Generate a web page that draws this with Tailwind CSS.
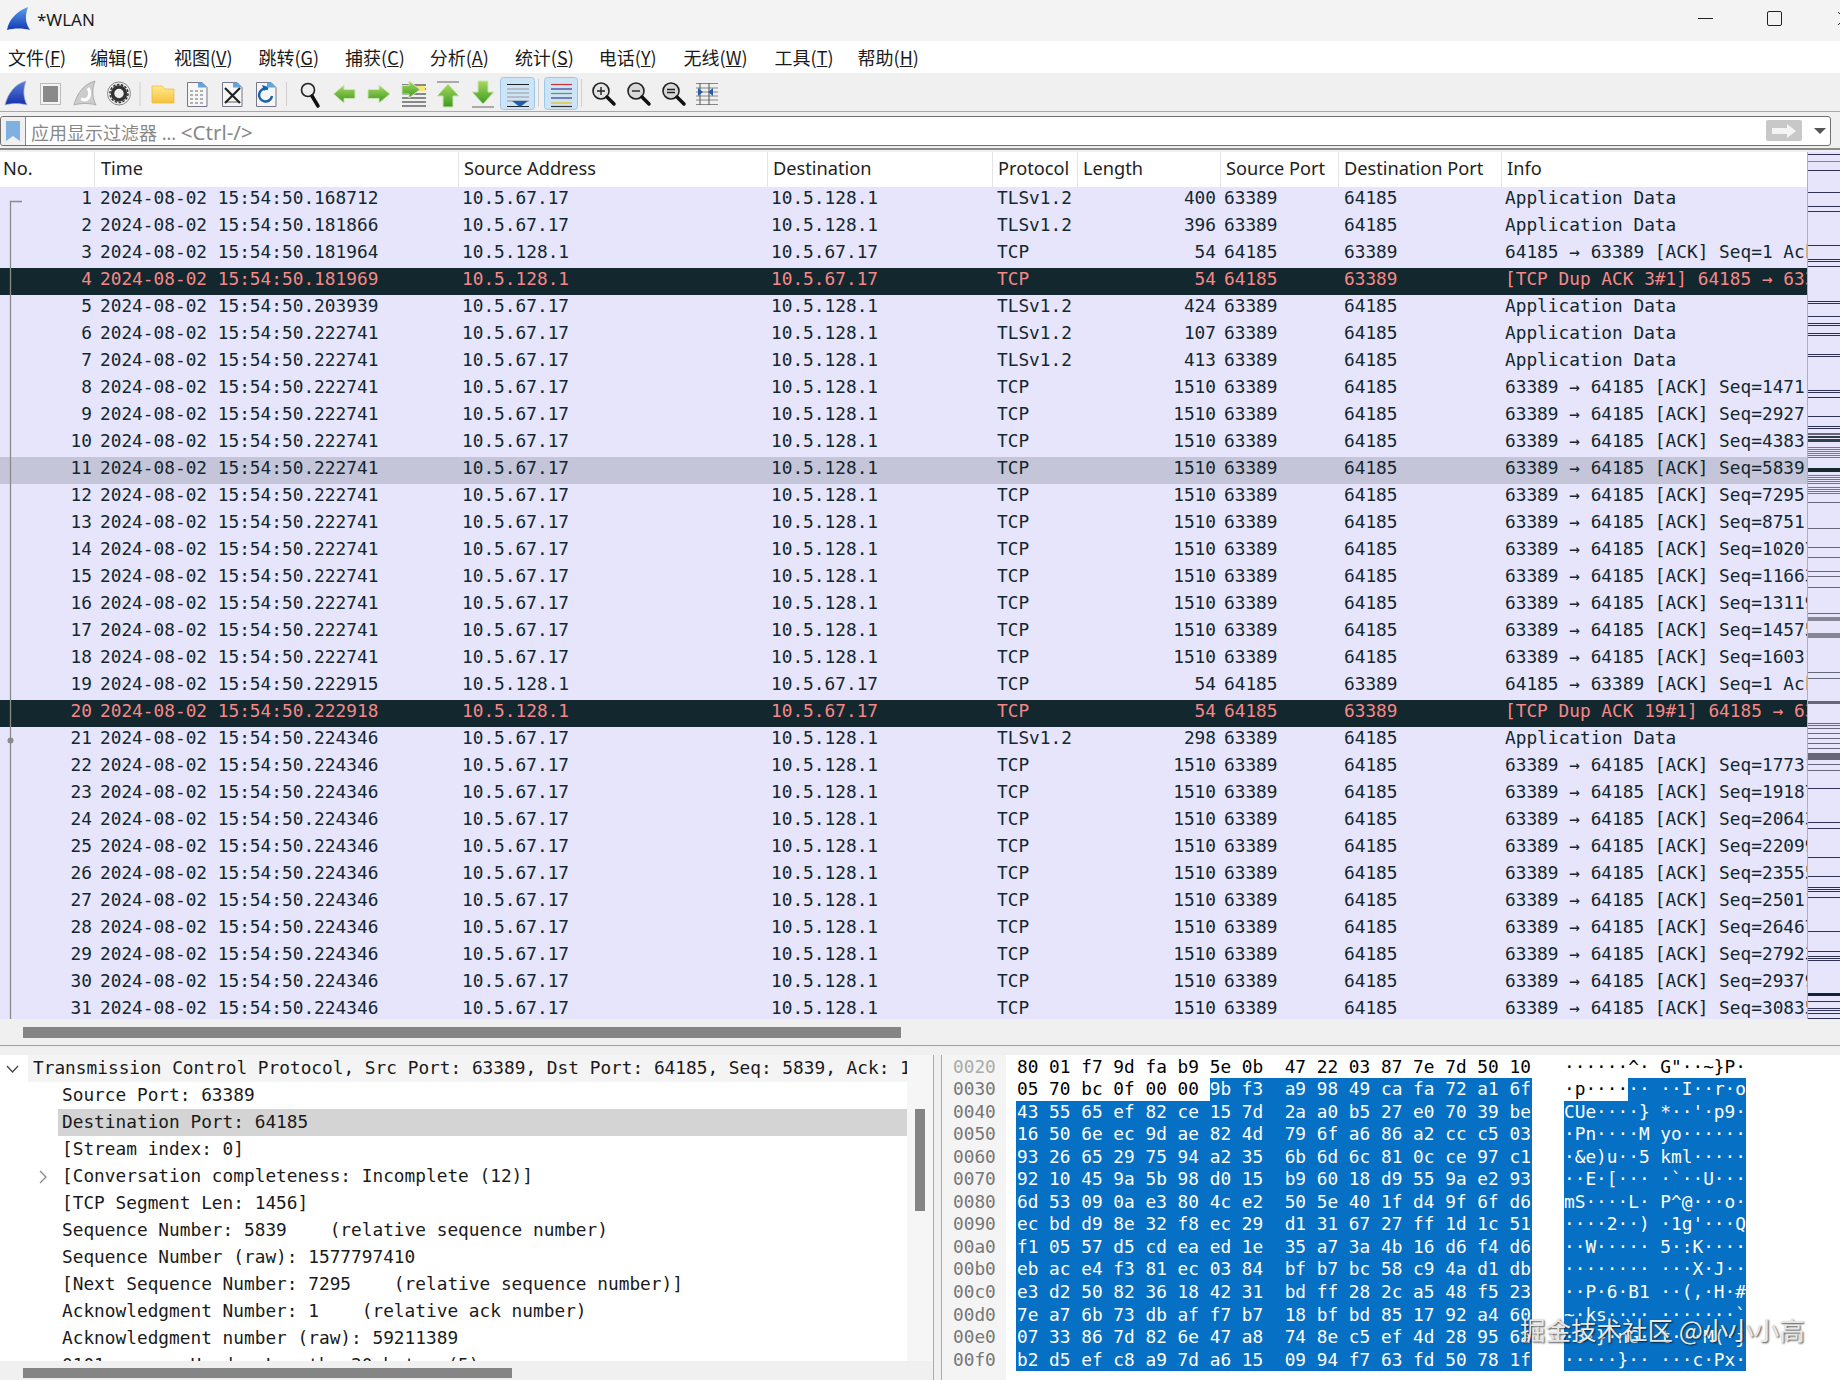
<!doctype html>
<html><head><meta charset="utf-8"><script src="https://cdn.jsdelivr.net/npm/@tailwindcss/browser@4"></script></head>
<body class="w-[1840px] h-[1380px] overflow-hidden bg-[#f0f0f0] font-['Noto_Sans','Noto_Sans_CJK_SC',sans-serif] text-[#1a1a1a]">
<div class="h-[41px] bg-[#f3f3f3] flex items-center relative">
 <svg class="ml-[7px] mb-[3px]" width="23" height="24" viewBox="0 0 23 24"><defs><linearGradient id="t" x1="0" y1="0" x2="0" y2="1"><stop offset="0" stop-color="#5aa0ee"/><stop offset="1" stop-color="#1438b4"/></linearGradient></defs><path d="M0 23C2 12 10 4 21 0C18 8 18 16 23 23C16 21 7 21 0 23Z" fill="url(#t)"/></svg>
 <span class="ml-[7px] pb-[2px] text-[17px]">*WLAN</span>
 <div class="absolute left-[1698px] top-[18px] w-[15px] h-[1px] bg-[#222]"></div>
 <div class="absolute left-[1767px] top-[11px] w-[15px] h-[15px] border border-[#222] rounded-[2px]"></div>
 <svg class="absolute left-[1837px] top-[11px]" width="3" height="15" viewBox="0 0 3 15"><path d="M1 1L14 14M1 14L14 1" stroke="#222"/></svg>
</div>
<div class="h-[32px] bg-white flex items-center pl-[8px] gap-[25px] text-[18px] font-['Noto_Sans_CJK_SC',sans-serif] leading-none">
 <span>文件(<u>F</u>)</span><span class="-ml-[1px]">编辑(<u>E</u>)</span><span>视图(<u>V</u>)</span><span class="ml-[1px]">跳转(<u>G</u>)</span><span class="ml-[1px]">捕获(<u>C</u>)</span><span>分析(<u>A</u>)</span><span class="ml-[1px]">统计(<u>S</u>)</span><span>电话(<u>Y</u>)</span><span class="ml-[2px] mr-[2px]">无线(<u>W</u>)</span><span class="-mr-[1px]">工具(<u>T</u>)</span><span>帮助(<u>H</u>)</span>
</div>
<div class="h-[39px] border-b border-[#a8a8a8] bg-[#f0f0f0] flex items-center pt-[2px] relative">
<svg width="730" height="37" viewBox="0 0 730 37" class="block">
 <defs>
  <linearGradient id="g" x1="0" y1="0" x2="0" y2="1"><stop offset="0" stop-color="#a8d860"/><stop offset="1" stop-color="#3c9a20"/></linearGradient>
  <linearGradient id="y" x1="0" y1="0" x2="0" y2="1"><stop offset="0" stop-color="#ffe88a"/><stop offset="1" stop-color="#f5c33c"/></linearGradient>
  <linearGradient id="b" x1="0" y1="0" x2="0" y2="1"><stop offset="0" stop-color="#5a7fe0"/><stop offset="1" stop-color="#1530a8"/></linearGradient>
 </defs>
 <path d="M5 30C8 18 15 9 26 6C23 14 23 22 27 30C20 28 12 28 5 30Z" fill="url(#b)" stroke="#9ab" stroke-width=".7"/>
 <rect x="40.500" y="8.500" width="20" height="21" fill="#f4f4f4" stroke="#bbb"/><rect x="43" y="11" width="15" height="16" fill="#8a8a8a"/>
 <path d="M74 30C77 18 84 9 95 6C92 14 92 22 96 30C89 28 81 28 74 30Z" fill="#ccc" stroke="#999" stroke-width=".7"/><path d="M88 13C91 17 90 24 85 25L81 24" fill="none" stroke="#fff" stroke-width="3"/>
 <circle cx="119" cy="18.500" r="11.500" fill="#eee" stroke="#888"/><circle cx="119" cy="18.500" r="6.500" fill="none" stroke="#333" stroke-width="3.500"/><circle cx="119" cy="18.500" r="9" fill="none" stroke="#333" stroke-width="1.500" stroke-dasharray="2.500 1.500"/>
 <rect x="139.500" y="7" width="1" height="24" fill="#cfcfcf"/>
 <path d="M152 11H162L165 14H174V28H152Z" fill="url(#y)" stroke="#e8b93a" stroke-width=".7"/>
 <path d="M187.500 7.500H202L207 12.500V31.500H187.500Z" fill="#f6f6f6" stroke="#778"/><path d="M198 7.500H202L207 12.500H198Z" fill="#5ea6dc"/>
 <path d="M190 16h3M195 16h3M200 16h3M190 20h3M195 20h3M200 20h3M190 24h3M195 24h3M200 24h3M190 28h3M195 28h3M200 28h3" stroke="#999" stroke-width="1.500"/>
 <path d="M222.500 7.500H237L242 12.500V31.500H222.500Z" fill="#f6f6f6" stroke="#778"/><path d="M233 7.500H237L242 12.500H233Z" fill="#5ea6dc"/><path d="M225 27h15" stroke="#aaa" stroke-width="2"/><path d="M225 13L240 28M240 13L225 28" stroke="#222" stroke-width="2.200"/>
 <path d="M256.500 7.500H271L276 12.500V31.500H256.500Z" fill="#f6f6f6" stroke="#778"/><path d="M267 7.500H271L276 12.500H267Z" fill="#5ea6dc"/><path d="M268 14A6.500 6.500 0 1 0 272 21" fill="none" stroke="#1560b0" stroke-width="2.500"/><path d="M262 10l6 2-4 4z" fill="#1560b0"/>
 <rect x="286" y="7" width="1" height="24" fill="#cfcfcf"/>
 <circle cx="308" cy="15" r="6.500" fill="#eee" stroke="#222" stroke-width="1.600"/><path d="M312 21L318 31" stroke="#111" stroke-width="3.500" stroke-linecap="round"/>
 <path d="M333.500 19L344 10V14.500H355V23.500H344V28Z" fill="url(#g)" stroke="#cfe5b5"/>
 <path d="M390 19L379 10V14.500H368V23.500H379V28Z" fill="url(#g)" stroke="#cfe5b5"/>
 <path d="M402 10H426M412 14H426M402 19H426M402 23H426M402 27H426M402 31H426" stroke="#222" stroke-width="1.200"/><rect x="412" y="11" width="13" height="5" fill="#f5e67a"/><path d="M420 13.500L409 5V9.500H402V18H409V22Z" transform="translate(0,1)" fill="url(#g)" stroke="#cfe5b5"/>
 <path d="M437 7H459" stroke="#aaa" stroke-width="2"/><path d="M448 9L459 21H453V32H443V21H437Z" fill="url(#g)" stroke="#cfe5b5"/>
 <path d="M472 32H494" stroke="#aaa" stroke-width="2"/><path d="M483 29L494 17H488V6H478V17H472Z" fill="url(#g)" stroke="#cfe5b5"/>
 <rect x="500.500" y="2.500" width="34" height="32" rx="3" fill="#cde4f7" stroke="#9cc7ea"/>
 <path d="M507 9.500H529" stroke="#222"/><path d="M507 14H529M507 18H529M507 22H529M507 26H529" stroke="#999"/><path d="M507 31.500H529" stroke="#222"/><path d="M512 26H528L520 32Z" fill="#1f5cab"/>
 <rect x="538" y="4" width="1" height="28" fill="#cfcfcf"/>
 <rect x="544.500" y="2.500" width="33" height="32" rx="3" fill="#cde4f7" stroke="#9cc7ea"/>
 <path d="M551 9.500H572" stroke="#c33" stroke-width="1.200"/><path d="M551 14H572" stroke="#333a8c" stroke-width="1.200"/><path d="M551 18.500H572" stroke="#5aa02c" stroke-width="1.200"/><path d="M551 23H572" stroke="#333a8c" stroke-width="1.200"/><path d="M551 28H572" stroke="#e8c830" stroke-width="1.500"/><path d="M551 31.500H572" stroke="#333" stroke-width="1.200"/>
 <rect x="581" y="4" width="1" height="28" fill="#cfcfcf"/>
 <circle cx="601" cy="16" r="8" fill="#e4e4e4" stroke="#222" stroke-width="1.600"/><path d="M597 16H605M601 12V20" stroke="#222" stroke-width="1.400"/><path d="M607 22L614 29" stroke="#111" stroke-width="3.500" stroke-linecap="round"/>
 <circle cx="636" cy="16" r="8" fill="#d8d8d8" stroke="#222" stroke-width="1.600"/><path d="M632 16H640" stroke="#222" stroke-width="1.400"/><path d="M642 22L649 29" stroke="#111" stroke-width="3.500" stroke-linecap="round"/>
 <circle cx="671" cy="16" r="8" fill="#d8d8d8" stroke="#222" stroke-width="1.600"/><path d="M667 14.500H675M667 17.500H675" stroke="#222" stroke-width="1.400"/><path d="M677 22L684 29" stroke="#111" stroke-width="3.500" stroke-linecap="round"/>
 <path d="M696 8.500H718M696 13H718M696 17H718M696 21H718M696 25H718M696 29.500H718" stroke="#888"/><path d="M700 8V30M709 8V30" stroke="#555"/><path d="M698 13L703 17L698 21Z M713 13L708 17L713 21Z" fill="#2a5da8"/>
</svg>
</div>
<div class="h-[4px]"></div>
<div class="h-[30px] w-[1831px] border border-[#707070] rounded-[3px] bg-white flex items-center relative">
 <div class="w-[25px] h-full border-r border-[#8a8a8a] bg-[#f0f0f0] flex items-center justify-center rounded-l-[3px]"><svg width="14" height="20" viewBox="0 0 14 20"><path d="M0 0H14V20L7 15L0 20Z" fill="#7fb0e0"/></svg></div>
 <span class="ml-[5px] pt-[2px] text-[18px] text-[#888] leading-none">应用显示过滤器 ... <span class="text-[20.5px]">&lt;Ctrl-/&gt;</span></span>
 <div class="absolute left-[1765px] top-[3px] w-[36px] h-[21px] rounded-[2px] bg-[#c8c8c8] flex items-center justify-center"><svg width="26" height="14" viewBox="0 0 26 14"><path d="M1 4H16V0L25 7L16 14V10H1Z" fill="#f4f4f4"/></svg></div>
 <svg class="absolute left-[1812px] top-[11px]" width="14" height="7" viewBox="0 0 14 7"><path d="M1 0H13L7 6Z" fill="#555"/></svg>
</div>
<div class="h-[2px]"></div>
<div class="h-[2px] bg-[#8c8c8c]"></div>
<div class="h-[2px] bg-[#f0f0f0]"></div>

<div class="h-[867px] relative overflow-hidden flex bg-[#e6e5fc]">
 <div class="w-[1807px] shrink-0 relative">
  <div class="h-[35px] bg-white grid grid-cols-[94px_364px_309px_225px_85px_143px_118px_163px_1fr] text-[18.2px] leading-[33px] text-[#222] [&>div]:pl-[5px] [&>div]:border-l [&>div]:border-[#e4e4e4]">
   <div class="!pl-[3px] !border-l-0">No.</div><div class="!pl-[6px]">Time</div><div>Source Address</div><div>Destination</div><div>Protocol</div><div>Length</div><div>Source Port</div><div>Destination Port</div><div>Info</div>
  </div>
  <div class="font-['DejaVu_Sans_Mono',monospace] text-[17.8px] leading-[22px] text-[#12272e] [&>p]:whitespace-pre [&>p]:h-[27px] [&>p]:overflow-hidden [&>p]:grid [&>p]:grid-cols-[92px_364px_309px_225px_85px_141px_118px_160px_313px] [&>p>span:nth-child(1)]:text-right [&>p>span:nth-child(2)]:pl-[8px] [&>p>span:nth-child(3)]:pl-[6px] [&>p>span:nth-child(4)]:pl-[6px] [&>p>span:nth-child(5)]:pl-[7px] [&>p>span:nth-child(6)]:text-right [&>p>span:nth-child(7)]:pl-[8px] [&>p>span:nth-child(8)]:pl-[10px] [&>p>span:nth-child(9)]:pl-[11px] [&>p>span:nth-child(9)]:overflow-hidden">
<p><span>1</span><span>2024-08-02 15:54:50.168712</span><span>10.5.67.17</span><span>10.5.128.1</span><span>TLSv1.2</span><span>400</span><span>63389</span><span>64185</span><span>Application Data</span></p>
<p><span>2</span><span>2024-08-02 15:54:50.181866</span><span>10.5.67.17</span><span>10.5.128.1</span><span>TLSv1.2</span><span>396</span><span>63389</span><span>64185</span><span>Application Data</span></p>
<p><span>3</span><span>2024-08-02 15:54:50.181964</span><span>10.5.128.1</span><span>10.5.67.17</span><span>TCP</span><span>54</span><span>64185</span><span>63389</span><span>64185 → 63389 [ACK] Seq=1 Ack=1471</span></p>
<p class="bg-[#12272e] text-[#f78787]"><span>4</span><span>2024-08-02 15:54:50.181969</span><span>10.5.128.1</span><span>10.5.67.17</span><span>TCP</span><span>54</span><span>64185</span><span>63389</span><span>[TCP Dup ACK 3#1] 64185 → 63389 [ACK]</span></p>
<p><span>5</span><span>2024-08-02 15:54:50.203939</span><span>10.5.67.17</span><span>10.5.128.1</span><span>TLSv1.2</span><span>424</span><span>63389</span><span>64185</span><span>Application Data</span></p>
<p><span>6</span><span>2024-08-02 15:54:50.222741</span><span>10.5.67.17</span><span>10.5.128.1</span><span>TLSv1.2</span><span>107</span><span>63389</span><span>64185</span><span>Application Data</span></p>
<p><span>7</span><span>2024-08-02 15:54:50.222741</span><span>10.5.67.17</span><span>10.5.128.1</span><span>TLSv1.2</span><span>413</span><span>63389</span><span>64185</span><span>Application Data</span></p>
<p><span>8</span><span>2024-08-02 15:54:50.222741</span><span>10.5.67.17</span><span>10.5.128.1</span><span>TCP</span><span>1510</span><span>63389</span><span>64185</span><span>63389 → 64185 [ACK] Seq=1471 Ack=1</span></p>
<p><span>9</span><span>2024-08-02 15:54:50.222741</span><span>10.5.67.17</span><span>10.5.128.1</span><span>TCP</span><span>1510</span><span>63389</span><span>64185</span><span>63389 → 64185 [ACK] Seq=2927 Ack=1</span></p>
<p><span>10</span><span>2024-08-02 15:54:50.222741</span><span>10.5.67.17</span><span>10.5.128.1</span><span>TCP</span><span>1510</span><span>63389</span><span>64185</span><span>63389 → 64185 [ACK] Seq=4383 Ack=1</span></p>
<p class="bg-[#c5c5d9]"><span>11</span><span>2024-08-02 15:54:50.222741</span><span>10.5.67.17</span><span>10.5.128.1</span><span>TCP</span><span>1510</span><span>63389</span><span>64185</span><span>63389 → 64185 [ACK] Seq=5839 Ack=1</span></p>
<p><span>12</span><span>2024-08-02 15:54:50.222741</span><span>10.5.67.17</span><span>10.5.128.1</span><span>TCP</span><span>1510</span><span>63389</span><span>64185</span><span>63389 → 64185 [ACK] Seq=7295 Ack=1</span></p>
<p><span>13</span><span>2024-08-02 15:54:50.222741</span><span>10.5.67.17</span><span>10.5.128.1</span><span>TCP</span><span>1510</span><span>63389</span><span>64185</span><span>63389 → 64185 [ACK] Seq=8751 Ack=1</span></p>
<p><span>14</span><span>2024-08-02 15:54:50.222741</span><span>10.5.67.17</span><span>10.5.128.1</span><span>TCP</span><span>1510</span><span>63389</span><span>64185</span><span>63389 → 64185 [ACK] Seq=10207 Ack=1</span></p>
<p><span>15</span><span>2024-08-02 15:54:50.222741</span><span>10.5.67.17</span><span>10.5.128.1</span><span>TCP</span><span>1510</span><span>63389</span><span>64185</span><span>63389 → 64185 [ACK] Seq=11663 Ack=1</span></p>
<p><span>16</span><span>2024-08-02 15:54:50.222741</span><span>10.5.67.17</span><span>10.5.128.1</span><span>TCP</span><span>1510</span><span>63389</span><span>64185</span><span>63389 → 64185 [ACK] Seq=13119 Ack=1</span></p>
<p><span>17</span><span>2024-08-02 15:54:50.222741</span><span>10.5.67.17</span><span>10.5.128.1</span><span>TCP</span><span>1510</span><span>63389</span><span>64185</span><span>63389 → 64185 [ACK] Seq=14575 Ack=1</span></p>
<p><span>18</span><span>2024-08-02 15:54:50.222741</span><span>10.5.67.17</span><span>10.5.128.1</span><span>TCP</span><span>1510</span><span>63389</span><span>64185</span><span>63389 → 64185 [ACK] Seq=16031 Ack=1</span></p>
<p><span>19</span><span>2024-08-02 15:54:50.222915</span><span>10.5.128.1</span><span>10.5.67.17</span><span>TCP</span><span>54</span><span>64185</span><span>63389</span><span>64185 → 63389 [ACK] Seq=1 Ack=17487</span></p>
<p class="bg-[#12272e] text-[#f78787]"><span>20</span><span>2024-08-02 15:54:50.222918</span><span>10.5.128.1</span><span>10.5.67.17</span><span>TCP</span><span>54</span><span>64185</span><span>63389</span><span>[TCP Dup ACK 19#1] 64185 → 63389 [ACK]</span></p>
<p><span>21</span><span>2024-08-02 15:54:50.224346</span><span>10.5.67.17</span><span>10.5.128.1</span><span>TLSv1.2</span><span>298</span><span>63389</span><span>64185</span><span>Application Data</span></p>
<p><span>22</span><span>2024-08-02 15:54:50.224346</span><span>10.5.67.17</span><span>10.5.128.1</span><span>TCP</span><span>1510</span><span>63389</span><span>64185</span><span>63389 → 64185 [ACK] Seq=17731 Ack=1</span></p>
<p><span>23</span><span>2024-08-02 15:54:50.224346</span><span>10.5.67.17</span><span>10.5.128.1</span><span>TCP</span><span>1510</span><span>63389</span><span>64185</span><span>63389 → 64185 [ACK] Seq=19187 Ack=1</span></p>
<p><span>24</span><span>2024-08-02 15:54:50.224346</span><span>10.5.67.17</span><span>10.5.128.1</span><span>TCP</span><span>1510</span><span>63389</span><span>64185</span><span>63389 → 64185 [ACK] Seq=20643 Ack=1</span></p>
<p><span>25</span><span>2024-08-02 15:54:50.224346</span><span>10.5.67.17</span><span>10.5.128.1</span><span>TCP</span><span>1510</span><span>63389</span><span>64185</span><span>63389 → 64185 [ACK] Seq=22099 Ack=1</span></p>
<p><span>26</span><span>2024-08-02 15:54:50.224346</span><span>10.5.67.17</span><span>10.5.128.1</span><span>TCP</span><span>1510</span><span>63389</span><span>64185</span><span>63389 → 64185 [ACK] Seq=23555 Ack=1</span></p>
<p><span>27</span><span>2024-08-02 15:54:50.224346</span><span>10.5.67.17</span><span>10.5.128.1</span><span>TCP</span><span>1510</span><span>63389</span><span>64185</span><span>63389 → 64185 [ACK] Seq=25011 Ack=1</span></p>
<p><span>28</span><span>2024-08-02 15:54:50.224346</span><span>10.5.67.17</span><span>10.5.128.1</span><span>TCP</span><span>1510</span><span>63389</span><span>64185</span><span>63389 → 64185 [ACK] Seq=26467 Ack=1</span></p>
<p><span>29</span><span>2024-08-02 15:54:50.224346</span><span>10.5.67.17</span><span>10.5.128.1</span><span>TCP</span><span>1510</span><span>63389</span><span>64185</span><span>63389 → 64185 [ACK] Seq=27923 Ack=1</span></p>
<p><span>30</span><span>2024-08-02 15:54:50.224346</span><span>10.5.67.17</span><span>10.5.128.1</span><span>TCP</span><span>1510</span><span>63389</span><span>64185</span><span>63389 → 64185 [ACK] Seq=29379 Ack=1</span></p>
<p><span>31</span><span>2024-08-02 15:54:50.224346</span><span>10.5.67.17</span><span>10.5.128.1</span><span>TCP</span><span>1510</span><span>63389</span><span>64185</span><span>63389 → 64185 [ACK] Seq=30835 Ack=1</span></p>
  </div>
  <svg class="absolute left-0 top-0" width="26" height="867" viewBox="0 152 26 867"><path d="M22 201.500H10.500V1019" fill="none" stroke="#8a8a8a" stroke-width="1.300"/><circle cx="10.500" cy="740.500" r="3" fill="#8a8a8a"/></svg>
 </div>
 <div class="w-[1px] bg-[#b0b0b0] shrink-0"></div>
 <svg class="block" width="32" height="867" viewBox="0 152 32 867">
  <path fill="none" stroke="#2e3056" stroke-width="1" d="M0 154.500H32M0 170.500H32M0 192.500H32M0 206.500H32M0 211.500H32M0 245.500H32M0 259.500H32M0 261.500H32M0 266.500H32M0 301.500H32M0 303.500H32M0 316.500H32M0 323.500H32M0 325.500H32M0 333.500H32M0 335.500H32M0 354.500H32M0 356.500H32M0 390.500H32M0 392.500H32M0 397.500H32M0 416.500H32M0 426.500H32M0 428.500H32"/>
  <path d="M0 161.500H32" stroke="#3c9cc8"/>
  <rect y="433" width="32" height="2" fill="#667"/><rect y="436" width="32" height="2" fill="#2e4048"/><rect y="439" width="32" height="3" fill="#2e4048"/>
  <path stroke="#778" d="M0 447.500H32M0 449.500H32M0 451.500H32M0 453.500H32M0 455.500H32M0 457.500H32M0 475.500H32M0 477.500H32M0 479.500H32M0 481.500H32M0 483.500H32M0 487.500H32M0 489.500H32M0 491.500H32M0 493.500H32"/>
  <rect y="468" width="32" height="4" fill="#12272e"/>
  <path fill="none" stroke="#666a78" d="M0 502.500H32M0 528.500H32M0 547.500H32M0 557.500H32M0 571.500H32M0 576.500H32M0 587.500H32M0 613.500H32M0 672.500H32M0 678.500H32M0 723.500H32M0 725.500H32M0 728.500H32M0 733.500H32M0 738.500H32M0 743.500H32M0 748.500H32M0 764.500H32M0 770.500H32"/>
  <rect y="617" width="32" height="4" fill="#858894"/><rect y="633" width="32" height="5" fill="#858894"/><rect y="701" width="32" height="3" fill="#667"/><rect y="753" width="32" height="7" fill="#667"/>
  <path fill="none" stroke="#2e3056" d="M0 788.500H32M0 822.500H32M0 828.500H32M0 857.500H32M0 876.500H32M0 887.500H32M0 889.500H32M0 891.500H32M0 897.500H32M0 931.500H32M0 951.500H32M0 956.500H32M0 958.500H32M0 960.500H32M0 1001.500H32M0 1008.500H32M0 1010.500H32M0 1013.500H32M0 1018.500H32"/>
  <rect y="993" width="32" height="3" fill="#12203a"/>
 </svg>
</div>

<div class="h-[27px] bg-[#f0f0f0] border-b border-[#a0a0a0] pt-[8px] pl-[23px]"><div class="w-[878px] h-[11px] bg-[#858585]"></div></div>
<div class="h-[9px]"></div>

<div class="h-[325px] flex overflow-hidden">
 <div class="w-[933px] shrink-0 flex flex-col">
  <div class="h-[306px] flex bg-white">
   <div class="w-[907px] shrink-0 overflow-hidden font-['DejaVu_Sans_Mono',monospace] text-[17.8px] leading-[25px] text-[#1a1a1a] [&>*]:whitespace-pre [&>p]:h-[27px] [&>p]:overflow-hidden [&>p]:pl-[62px]">
    <div class="h-[27px] flex items-start overflow-hidden"><div class="w-[28px] shrink-0 h-[27px] flex items-center justify-center pr-[4px]"><svg width="13" height="8" viewBox="0 0 13 8"><path d="M1 1L6.500 7L12 1" fill="none" stroke="#444" stroke-width="1.300"/></svg></div><div class="flex-1 h-[27px] bg-[#f4f4f4] pl-[5px]">Transmission Control Protocol, Src Port: 63389, Dst Port: 64185, Seq: 5839, Ack: 1</div></div>
    <p>Source Port: 63389</p>
    <div class="ml-[58px] h-[27px] bg-[#d4d4d4] pl-[4px]">Destination Port: 64185</div>
    <p>[Stream index: 0]</p>
    <div class="h-[27px] flex pl-[39px]"><div class="w-[23px] h-[27px] flex items-center"><svg width="8" height="14" viewBox="0 0 8 14"><path d="M1 1L7 7L1 13" fill="none" stroke="#888" stroke-width="1.300"/></svg></div><span>[Conversation completeness: Incomplete (12)]</span></div>
    <p>[TCP Segment Len: 1456]</p>
    <p>Sequence Number: 5839    (relative sequence number)</p>
    <p>Sequence Number (raw): 1577797410</p>
    <p>[Next Sequence Number: 7295    (relative sequence number)]</p>
    <p>Acknowledgment Number: 1    (relative ack number)</p>
    <p>Acknowledgment number (raw): 59211389</p>
    <p>0101 .... = Header Length: 20 bytes (5)</p>
   </div>
   <div class="flex-1 bg-[#f6f6f6] pt-[54px] pl-[8px]"><div class="w-[10px] h-[102px] bg-[#858585]"></div></div>
  </div>
  <div class="flex-1 bg-[#f0f0f0] pt-[7px] pl-[23px]"><div class="w-[489px] h-[10px] bg-[#858585]"></div></div>
 </div>
 <div class="w-[1px] bg-[#aaa]"></div>
 <div class="w-[7px] bg-[#f0f0f0]"></div>
 <div class="w-[1px] bg-[#aaa]"></div>
 <div class="flex-1 flex relative bg-white font-['DejaVu_Sans_Mono',monospace] text-[17.8px] leading-[22.55px]">
  <div class="w-[64px] shrink-0 bg-[#f4f4f4] pt-[0.5px] pl-[11px] text-[#777]">
   <div class="text-[#aaa]">0020</div><div>0030</div><div>0040</div><div>0050</div><div>0060</div><div>0070</div><div>0080</div><div>0090</div><div>00a0</div><div>00b0</div><div>00c0</div><div>00d0</div><div>00e0</div><div>00f0</div>
  </div>
  <div class="ml-[10px] pt-[0.5px] text-black [&>p]:whitespace-pre [&>p]:h-[22.55px] [&>p]:flex [&>p>span]:pl-[1px] [&>p>b]:font-normal [&>p>b]:bg-[#0670c5] [&>p>b]:text-white [&>p>b]:w-[516px] [&>p>b]:pl-[1px]">
   <p><span>80 01 f7 9d fa b9 5e 0b  47 22 03 87 7e 7d 50 10</span></p>
   <p><span>05 70 bc 0f 00 00 </span><b class="!w-[322px] !pl-0">9b f3  a9 98 49 ca fa 72 a1 6f</b></p>
   <p><b>43 55 65 ef 82 ce 15 7d  2a a0 b5 27 e0 70 39 be</b></p>
   <p><b>16 50 6e ec 9d ae 82 4d  79 6f a6 86 a2 cc c5 03</b></p>
   <p><b>93 26 65 29 75 94 a2 35  6b 6d 6c 81 0c ce 97 c1</b></p>
   <p><b>92 10 45 9a 5b 98 d0 15  b9 60 18 d9 55 9a e2 93</b></p>
   <p><b>6d 53 09 0a e3 80 4c e2  50 5e 40 1f d4 9f 6f d6</b></p>
   <p><b>ec bd d9 8e 32 f8 ec 29  d1 31 67 27 ff 1d 1c 51</b></p>
   <p><b>f1 05 57 d5 cd ea ed 1e  35 a7 3a 4b 16 d6 f4 d6</b></p>
   <p><b>eb ac e4 f3 81 ec 03 84  bf b7 bc 58 c9 4a d1 db</b></p>
   <p><b>e3 d2 50 82 36 18 42 31  bd ff 28 2c a5 48 f5 23</b></p>
   <p><b>7e a7 6b 73 db af f7 b7  18 bf bd 85 17 92 a4 60</b></p>
   <p><b>07 33 86 7d 82 6e 47 a8  74 8e c5 ef 4d 28 95 6a</b></p>
   <p><b>b2 d5 ef c8 a9 7d a6 15  09 94 f7 63 fd 50 78 1f</b></p>
  </div>
  <div class="ml-[32px] pt-[0.5px] text-black [&>p]:whitespace-pre [&>p]:h-[22.55px] [&>p]:flex [&>p>b]:font-normal [&>p>b]:bg-[#0670c5] [&>p>b]:text-white [&>p>b]:w-[182px]">
   <p><span>······^· G"··~}P·</span></p>
   <p><span>·p····</span><b class="!w-[118px]">·· ··I··r·o</b></p>
   <p><b>CUe····} *··'·p9·</b></p>
   <p><b>·Pn····M yo······</b></p>
   <p><b>·&amp;e)u··5 kml·····</b></p>
   <p><b>··E·[··· ·`··U···</b></p>
   <p><b>mS····L· P^@···o·</b></p>
   <p><b>····2··) ·1g'···Q</b></p>
   <p><b>··W····· 5·:K····</b></p>
   <p><b>········ ···X·J··</b></p>
   <p><b>··P·6·B1 ··(,·H·#</b></p>
   <p><b>~·ks···· ·······`</b></p>
   <p><b>·3·}·nG· t···M(·j</b></p>
   <p><b>·····}·· ···c·Px·</b></p>
  </div>
  <div class="absolute left-[578px] top-[259px] whitespace-pre font-['Noto_Sans_CJK_SC',sans-serif] text-[25.5px] leading-[30px] text-[#e8e8e8] [text-shadow:1px_1px_2px_rgba(0,0,0,.75)]">掘金技术社区 @小小小高</div>
 </div>
</div>
</body></html>
